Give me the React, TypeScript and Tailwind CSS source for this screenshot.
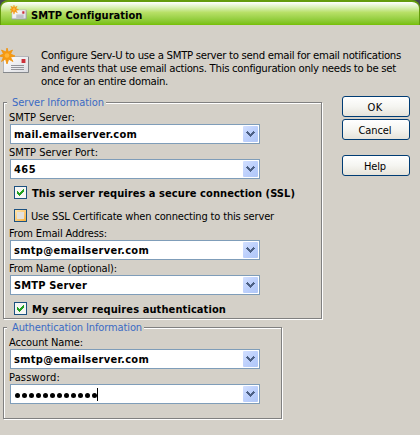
import { useLayoutEffect, useRef, type ReactNode } from "react";

/** One line of text whose tracking is adjusted to fill the given width. */
function Line({ text, width, className = "" }: { text: string; width: number; className?: string }) {
  const ref = useRef<HTMLSpanElement>(null);
  useLayoutEffect(() => {
    const el = ref.current;
    if (!el) return;
    el.style.letterSpacing = "0px";
    const natural = el.getBoundingClientRect().width;
    el.style.letterSpacing = `${(width - natural) / text.length}px`;
  }, [text, width]);
  return (
    <span ref={ref} className={`block w-max whitespace-pre ${className}`}>
      {text}
    </span>
  );
}

function MailIcon({ className }: { className: string }) {
  return (
    <svg viewBox="0 0 30 26" className={className}>
      <defs>
        <linearGradient id="paper" x1="0" y1="0" x2="1" y2="1">
          <stop offset="0" stopColor="#fff" />
          <stop offset="1" stopColor="#dcdde2" />
        </linearGradient>
      </defs>
      <rect x="3.5" y="8.5" width="25" height="16" fill="url(#paper)" stroke="#b4b6ba" />
      <path d="M3 24.500h25.500V9" fill="none" stroke="#85888c" />
      <rect x="21" y="11" width="5" height="4" fill="#e09a9c" />
      <rect x="22" y="11" width="3" height="4" fill="#cc2f3a" />
      <path d="M11 17.500h13M11 19.500h13M11 21.500h13" stroke="#94959b" />
      <path
        d="M7 0l1.300 4L12.500 2l-2 4L15 8l-4.500 1.200L13 13.500l-4.300-2.300L7 16l-1.500-5L1.500 13.500l2-4.500L-1 8l4.500-2L1.500 2 6 4z"
        fill="#f79a10"
        stroke="#f0920c"
        strokeWidth=".8"
      />
      <circle cx="7" cy="7.500" r="2.300" fill="#ffb53a" />
    </svg>
  );
}

function Group({ title, titleWidth, className, children }: { title: string; titleWidth: number; className: string; children: ReactNode }) {
  return (
    <section
      className={`relative border border-[#808080] pl-[6px] shadow-[1px_1px_0_#fff,inset_1px_1px_0_#fff] ${className}`}
    >
      <div className="absolute -top-[7px] left-[3px] bg-[#d4d0c8] pr-[2px] pl-[5px] text-[#3b6bc4]">
        <Line text={title} width={titleWidth} className="leading-[14px]" />
      </div>
      {children}
    </section>
  );
}

function Field({ label, labelWidth, value, valueWidth, password = false }: { label: string; labelWidth: number; value: string; valueWidth: number; password?: boolean }) {
  return (
    <div className="h-[35px]">
      <Line text={label} width={labelWidth} className="-ml-px h-[15px] pt-[2px] leading-[14px]" />
      <div className="flex h-[20px] w-[250px] items-center justify-between border border-[#7f9db9] bg-white pr-px pl-[3px]">
        {password ? (
          <div className="flex h-[14px] items-center pl-px">
            <div className="flex gap-[2px] pt-[3px]">
              {Array.from(value, (_, i) => (
                <i key={i} className="h-[5px] w-[5px] rounded-full bg-black" />
              ))}
            </div>
            <span className="h-[13px] w-px bg-black" />
          </div>
        ) : (
          <Line text={value} width={valueWidth} className="pt-px font-bold leading-[14px]" />
        )}
        <span className="flex h-[16px] w-[15px] items-center justify-center rounded-[1px] bg-linear-to-br from-[#d3e0ff] via-[#bdd0fc] to-[#afc6f7]">
          <svg viewBox="0 0 9 6" className="h-[6px] w-[9px]" shapeRendering="crispEdges">
            <path d="M0 1h1V0h1v1h1v1h1v1h1V2h1V1h1V0h1v1h1v1H8v1H7v1H6v1H5v1H4V5H3V4H2V3H1V2H0z" fill="#4d6185" />
          </svg>
        </span>
      </div>
    </div>
  );
}

function Check({ label, width, checked = false, className = "" }: { label: string; width: number; checked?: boolean; className?: string }) {
  return (
    <label className={`flex h-[13px] items-center pl-[4px] ${className}`}>
      <span
        className={`flex h-[13px] w-[13px] items-center justify-center border border-[#1c5180] ${
          checked ? "bg-[#f6f6f3]" : "bg-linear-to-br from-[#ffe6b0] to-[#f8b235]"
        }`}
      >
        {checked ? (
          <svg viewBox="0 0 7 7" className="h-[7px] w-[7px]" shapeRendering="crispEdges">
            <path d="M0 2h1v1h1v1h1V3h1V2h1V1h1V0h1v3H6v1H5v1H4v1H3v1H2V6H1V5H0z" fill="#21a121" />
          </svg>
        ) : (
          <i className="h-[7px] w-[7px] bg-[#e3e1dc]" />
        )}
      </span>
      <Line
        text={label}
        width={width}
        className={`pt-[2px] leading-[14px] ${checked ? "ml-[5px] font-bold" : "ml-[4px]"}`}
      />
    </label>
  );
}

function Button({ label, width, className = "" }: { label: string; width: number; className?: string }) {
  return (
    <button
      className={`flex h-[21px] w-[68px] items-center justify-center rounded-[3px] border border-[#003c74] bg-linear-to-b from-white via-[#f5f5f1] to-[#e6e3da] pt-[2px] pr-[2px] ${className}`}
    >
      <Line text={label} width={width} className="leading-[14px]" />
    </button>
  );
}

export default function App() {
  return (
    <div className="h-[435px] w-[420px] overflow-hidden bg-[#d4d0c8] font-['DejaVu_Sans_Condensed','DejaVu_Sans',sans-serif] text-[11px] text-black [font-stretch:condensed]">
      <header className="h-[25px] bg-[#454552]">
        <div className="flex h-[25px] items-start rounded-t-[8px] border-x border-t-2 border-[#639b0c] bg-linear-to-b from-white via-[#b8e067] via-45% to-[#76bf00] pt-[3px] pl-[9px]">
          <MailIcon className="h-[15px] w-[17px]" />
          <Line text="SMTP Configuration" width={111} className="ml-[4px] pt-[4px] font-bold leading-[14px]" />
        </div>
      </header>

      <div className="flex h-[77px] pt-[23px]">
        <MailIcon className="h-[26px] w-[30px]" />
        <div className="ml-[11px] pt-px text-[11.3px]">
          <Line text="Configure Serv-U to use a SMTP server to send email for email notifications" width={360} className="leading-[13px]" />
          <Line text="and events that use email actions. This configuration only needs to be set" width={355} className="leading-[13px]" />
          <Line text="once for an entire domain." width={127} className="leading-[13px]" />
        </div>
      </div>

      <div className="flex gap-[20px] pl-[3px]">
        <div className="w-[319px]">
          <Group title="Server Information" titleWidth={92} className="h-[217px] w-[319px] pt-[6px]">
            <Field label="SMTP Server:" labelWidth={66} value="mail.emailserver.com" valueWidth={123} />
            <Field label="SMTP Server Port:" labelWidth={89} value="465" valueWidth={22} />
            <Check label="This server requires a secure connection (SSL)" width={263} checked className="mt-[7px]" />
            <Check label="Use SSL Certificate when connecting to this server" width={243} className="mt-[10px]" />
            <div className="pt-[3px]">
              <Field label="From Email Address:" labelWidth={98} value="smtp@emailserver.com" valueWidth={135} />
              <Field label="From Name (optional):" labelWidth={108} value="SMTP Server" valueWidth={73} />
            </div>
            <Check label="My server requires authentication" width={194} checked className="mt-[7px]" />
          </Group>
          <Group title="Authentication Information" titleWidth={130} className="mt-[8px] h-[92px] w-[279px] pt-[6px]">
            <Field label="Account Name:" labelWidth={74} value="smtp@emailserver.com" valueWidth={135} />
            <Field label="Password:" labelWidth={51} value="············" valueWidth={84} password />
          </Group>
        </div>
        <aside className="-mt-[6px] flex flex-col gap-[2px]">
          <Button label="OK" width={15} />
          <Button label="Cancel" width={33} />
          <Button label="Help" width={22} className="mt-[13px]" />
        </aside>
      </div>
    </div>
  );
}
